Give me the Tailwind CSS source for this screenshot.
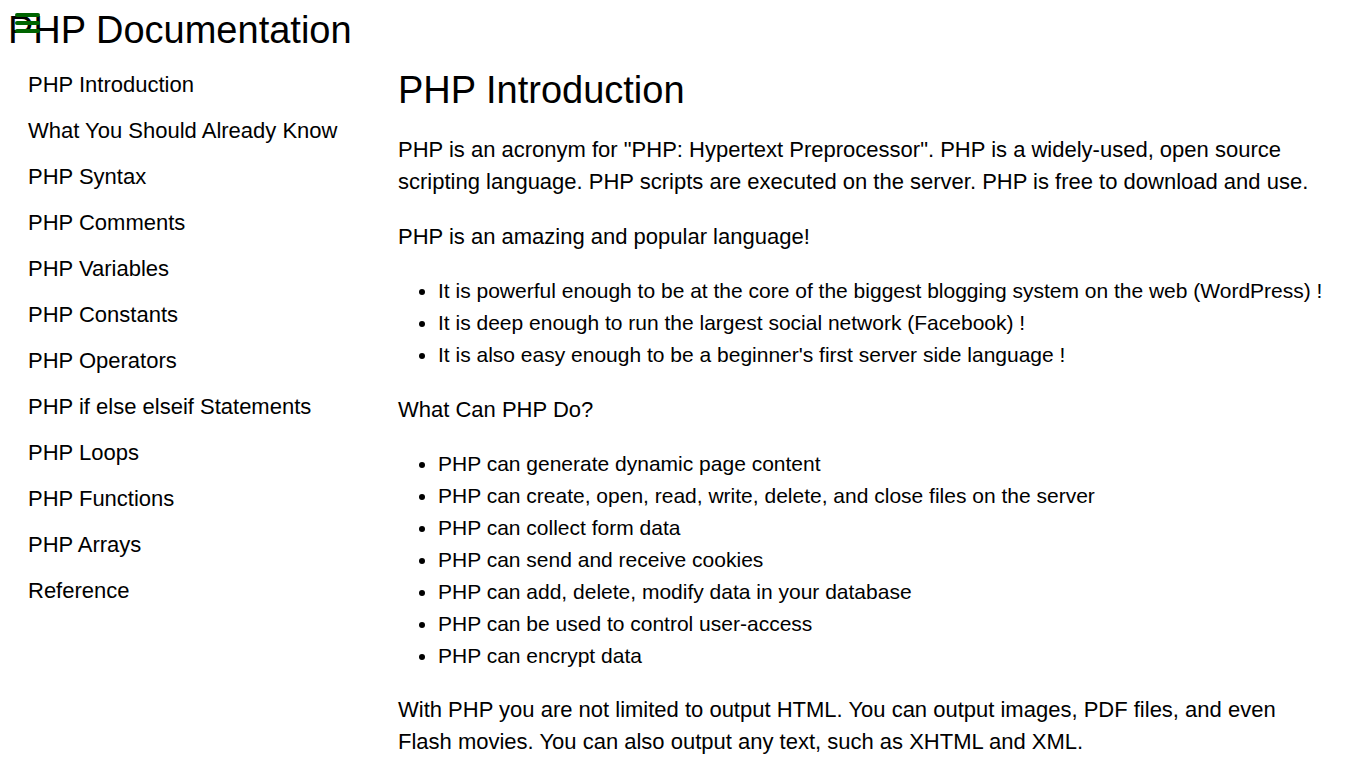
<!DOCTYPE html>
<html lang="en">
<head>
<meta charset="utf-8">
<meta name="viewport" content="width=device-width, initial-scale=1">
<title>PHP Documentation</title>
<script src="https://cdn.jsdelivr.net/npm/@tailwindcss/browser@4"></script>
</head>
<body class="bg-white font-['Liberation_Sans',Arial,sans-serif] text-[22px] leading-8 text-black">
<button type="button" aria-label="Toggle menu" class="fixed top-2 left-2 z-10 h-8 w-10">
<svg class="h-8 w-10" viewBox="0 0 40 32" fill="none" stroke="#006400" stroke-width="4" stroke-linecap="round" aria-hidden="true"><path d="M9 7H30M9 15H30M9 23H30"/></svg>
</button>
<div class="flex">
<nav id="navbar" class="w-[390px] shrink-0 px-2 pt-2">
<h1 class="text-[38px] leading-11">PHP Documentation</h1>
<ul class="mt-[9px] pl-5">
<li><a class="block h-[46px] pt-2" href="#PHP_Introduction">PHP Introduction</a></li>
<li><a class="block h-[46px] pt-2" href="#What_You_Should_Already_Know">What You Should Already Know</a></li>
<li><a class="block h-[46px] pt-2" href="#PHP_Syntax">PHP Syntax</a></li>
<li><a class="block h-[46px] pt-2" href="#PHP_Comments">PHP Comments</a></li>
<li><a class="block h-[46px] pt-2" href="#PHP_Variables">PHP Variables</a></li>
<li><a class="block h-[46px] pt-2" href="#PHP_Constants">PHP Constants</a></li>
<li><a class="block h-[46px] pt-2" href="#PHP_Operators">PHP Operators</a></li>
<li><a class="block h-[46px] pt-2" href="#PHP_if_else_elseif_Statements">PHP if else elseif Statements</a></li>
<li><a class="block h-[46px] pt-2" href="#PHP_Loops">PHP Loops</a></li>
<li><a class="block h-[46px] pt-2" href="#PHP_Functions">PHP Functions</a></li>
<li><a class="block h-[46px] pt-2" href="#PHP_Arrays">PHP Arrays</a></li>
<li><a class="block h-[46px] pt-2" href="#Reference">Reference</a></li>
</ul>
</nav>
<main class="min-w-0 flex-1 pt-[68px] pr-9 pl-2">
<section id="PHP_Introduction">
<h2 class="text-[38px] leading-11">PHP Introduction</h2>
<p class="mt-[22px]">PHP is an acronym for "PHP: Hypertext Preprocessor". PHP is a widely-used, open source scripting language. PHP scripts are executed on the server. PHP is free to download and use.</p>
<p class="mt-[23px]">PHP is an amazing and popular language!</p>
<ul class="mt-[22px] list-disc pl-10 text-[21px] leading-8">
<li>It is powerful enough to be at the core of the biggest blogging system on the web (WordPress) !</li>
<li>It is deep enough to run the largest social network (Facebook) !</li>
<li>It is also easy enough to be a beginner's first server side language !</li>
</ul>
<p class="mt-[23px]">What Can PHP Do?</p>
<ul class="mt-[22px] list-disc pl-10 text-[21px] leading-8">
<li>PHP can generate dynamic page content</li>
<li>PHP can create, open, read, write, delete, and close files on the server</li>
<li>PHP can collect form data</li>
<li>PHP can send and receive cookies</li>
<li>PHP can add, delete, modify data in your database</li>
<li>PHP can be used to control user-access</li>
<li>PHP can encrypt data</li>
</ul>
<p class="mt-[22px]">With PHP you are not limited to output HTML. You can output images, PDF files, and even Flash movies. You can also output any text, such as XHTML and XML.</p>
</section>
</main>
</div>
</body>
</html>
